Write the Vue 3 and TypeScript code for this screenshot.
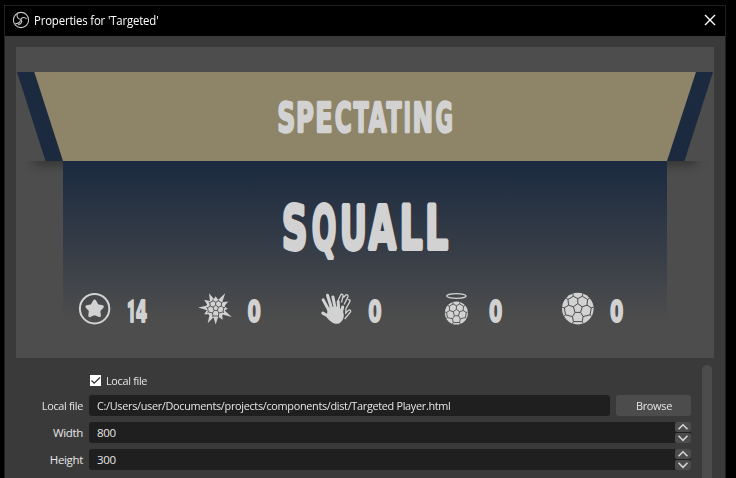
<script setup lang="ts">
import { ref } from 'vue'

interface Glyph { ch: string; x: number; len: number }

// [advance, ink start, ink end] of each bold glyph, in font units
const metrics: Record<string, [number, number, number]> = {
  S: [1475, 128, 1366], P: [1501, 188, 1416], E: [1399, 188, 1276], C: [1503, 102, 1376],
  T: [1397, 10, 1386], A: [1585, 7, 1577], I: [762, 188, 573], N: [1714, 188, 1526],
  G: [1681, 102, 1530], Q: [1741, 102, 1638], U: [1663, 174, 1489], L: [1305, 188, 1268],
  0: [1425, 94, 1331], 4: [1425, 74, 1352], 1: [1184, 130, 850],
}

// Stretches a glyph so that its inked part starts at x and is w wide
function fit(ch: string, x: number, w: number, stroke: number): Glyph {
  const [adv, a, b] = metrics[ch]
  const k = (w - stroke) / (b - a)
  return { ch, x: x + stroke / 2 - k * a, len: k * adv }
}
function word(text: string, xs: number[], ws: number[], stroke: number): Glyph[] {
  return [...text].map((ch, i) => fit(ch, xs[i], ws[i], stroke))
}

const title = word(
  'SPECTATING',
  [277.6, 297, 316.3, 334.7, 352.4, 367.5, 385.4, 404.2, 413.5, 435.3],
  [17.5, 17, 16, 16.9, 17.3, 20.5, 17.3, 6.2, 18.5, 17.3],
  2.4,
)
const player = word('SQUALL', [282, 311.3, 340.7, 366.7, 401, 426.5], [25.5, 25.5, 25.3, 31.2, 23, 23], 3.8)
const score = word('14', [127, 135.3], [7.4, 12.3], 2)
const zeros = [247.4, 368.1, 488.9, 609.8].map((x) => fit('0', x, 13.6, 2))

const tips = [
  [0, -12], [9.5, -15], [12.5, -6.7], [12, 0.5], [16, 8.9], [7, 11.5],
  [0, 16.3], [-8, 15], [-11.5, 6], [-17.5, -0.7], [-11.5, -8.5], [-6.7, -15],
]
const spikes = tips.map(([x, y]) => {
  const a = Math.atan2(y, x)
  const p = (t: number) => `${(8.6 * Math.cos(t)).toFixed(2)} ${(8.6 * Math.sin(t)).toFixed(2)}`
  return `M${p(a - 0.29)}L${x} ${y}L${p(a + 0.29)}Z`
}).join('')

const local = ref(true)
const path = ref('C:/Users/user/Documents/projects/components/dist/Targeted Player.html')
const sizes = ref([
  { label: 'Width', value: 800 },
  { label: 'Height', value: 300 },
])
</script>

<template>
  <div class="desktop">
    <section class="window">
      <header class="titlebar">
        <svg class="logo" viewBox="0 0 18 18" width="18" height="18">
          <circle cx="9" cy="9" r="7.6" />
          <path d="M5.3 3.2C4.4 6 6 8.2 8.8 8.2C10 6.3 12.8 5.5 14.6 8M9 8.4C10.5 10.6 9.3 13.2 6.2 13.6M3.4 12.4C5.4 13 7.6 12 8.6 9.4" />
        </svg>
        <h1>Properties for 'Targeted'</h1>
        <svg class="close" viewBox="0 0 12 12" width="12" height="12"><path d="M1 1L11 11M11 1L1 11" /></svg>
      </header>

      <main class="content">
        <svg class="preview" viewBox="16 47 698 311" width="698" height="311">
          <defs>
            <linearGradient id="body" x1="0" y1="0" x2="0" y2="1">
              <stop offset="0" stop-color="#1b2a40" />
              <stop offset="1" stop-color="#1b2a40" stop-opacity="0" />
            </linearGradient>
            <filter id="soft" x="-10%" y="-100%" width="120%" height="300%"><feGaussianBlur stdDeviation="6" /></filter>
            <clipPath id="under"><path d="M16 161H714V190H16Z" /></clipPath>
            <clipPath id="disc"><circle r="15.8" /></clipPath>
            <g id="ball">
              <circle r="15.8" class="fill" />
              <path
                clip-path="url(#disc)"
                class="seam"
                d="M0-5L4.4-1.8L2.8 3.8H-2.8L-4.4-1.8ZM0-5V-10M4.4-1.8L9.2-3.4M2.8 3.8L5.3 8M-2.8 3.8L-5.3 8M-4.4-1.8L-9.2-3.4M0-10L4.5-12.3L9.8-9.2L9.2-3.4L13.5-.8L12.3 6.2L5.3 8L4.4 13H-4.4L-5.3 8L-12.3 6.2L-13.5-.8L-9.2-3.4L-9.8-9.2L-4.5-12.3ZM4.5-12.3L5.3-16M-4.5-12.3L-5.3-16M9.8-9.2L13-11M-9.8-9.2L-13-11M13.5-.8L17-1.8M-13.5-.8L-17-1.8M12.3 6.2L15 9M-12.3 6.2L-15 9M4.4 13L6 16M-4.4 13L-6 16"
              />
            </g>
          </defs>

          <path clip-path="url(#under)" filter="url(#soft)" class="shadow" d="M34 148H696V164H34Z" />
          <rect x="63" y="161" width="604" height="160" class="base" />
          <rect x="63" y="161" width="604" height="160" fill="url(#body)" />
          <path class="navy" d="M17 72H713L684.5 161H45.5Z" />
          <path class="gold" d="M34.3 72H696L667 161H63Z" />

          <text class="block title" y="131.8"><tspan v-for="(g, i) in title" :key="i" :x="g.x" :textLength="g.len" lengthAdjust="spacingAndGlyphs">{{ g.ch }}</tspan></text>
          <text class="block player" y="249.2"><tspan v-for="(g, i) in player" :key="i" :x="g.x" :textLength="g.len" lengthAdjust="spacingAndGlyphs">{{ g.ch }}</tspan></text>
          <text class="block stat" y="321.8"><tspan v-for="(g, i) in score" :key="i" :class="{ one: g.ch === '1' }" :x="g.x" :textLength="g.len" lengthAdjust="spacingAndGlyphs">{{ g.ch }}</tspan></text>
          <text v-for="g in zeros" :key="g.x" class="block stat" :x="g.x" y="321.8" :textLength="g.len" lengthAdjust="spacingAndGlyphs">{{ g.ch }}</text>

          <g transform="translate(94.6 308.7)">
            <circle r="14.7" class="ring" />
            <path class="star" d="M0-7.6L2.6-3.1L7.7-2L4.2 1.8L4.8 6.9L0 4.8L-4.8 6.9L-4.2 1.8L-7.7-2L-2.6-3.1Z" />
          </g>
          <g transform="translate(215.7 308.2)">
            <path class="fill" :d="spikes" />
            <use href="#ball" transform="scale(.6)" class="heavy" />
          </g>
          <g transform="translate(335.5 308.5)">
            <path class="outline" d="M2.8-8.5L5-13.2C6-15 8-14.2 7.6-12.5L6-6M8-11L10-13.2C11.5-14.6 13.2-13.2 12.4-11.6L8.6-4M12.4-8.5C14-9.6 15.2-8.2 14.2-6.6L10.4.2L10.2 4.6L13.2 1.6C14.8.8 15.8 2.2 14.8 3.6L9.2 10.5" />
            <path class="fingers" d="M-12.7 4.6L-5 9M-12.3-8.6L-5.4 4M-8-13.2L-3 3M-2.6-11.6L.3 3M2.7-7L3.3 4M7.2-1.6L5 8" />
            <path class="fill" d="M-7.5-1L3-2L7.6 3.5C9.6 8.5 7 13 3.4 15C-1.5 16.4-5.5 13-9 8.5Z" />
          </g>
          <g transform="translate(456.4 0)">
            <ellipse cx="0" cy="296" rx="9.7" ry="2.4" class="halo" />
            <use href="#ball" transform="translate(0 313) scale(.73)" class="mid" />
          </g>
          <use href="#ball" transform="translate(577.8 308.6)" />
        </svg>

        <div class="form">
          <div class="rows">
            <label class="check" @click="local = !local">
              <svg viewBox="0 0 11 11" width="11" height="11"><rect width="11" height="11" /><path v-if="local" d="M1.5 5.5L4.2 8.2L10 2.5" /></svg>
              <span class="narrow">Local file</span>
            </label>
            <div class="row">
              <span class="label narrow">Local file</span>
              <div class="field file"><span class="narrow">{{ path }}</span></div>
              <button class="browse"><span>Browse</span></button>
            </div>
            <div v-for="s in sizes" :key="s.label" class="row">
              <span class="label">{{ s.label }}</span>
              <div class="field number">
                <span>{{ s.value }}</span>
                <div class="spin">
                  <button @click="s.value++"><svg viewBox="0 0 16 10" width="16" height="10"><path d="M3.5 7.3L8 2.8L12.5 7.3" /></svg></button>
                  <button @click="s.value--"><svg viewBox="0 0 16 10" width="16" height="10"><path d="M3.5 2.8L8 7.3L12.5 2.8" /></svg></button>
                </div>
              </div>
            </div>
          </div>
          <div class="scrollbar"></div>
        </div>
      </main>
    </section>
  </div>
</template>

<style>
body { background: #000; overflow: hidden; }
</style>

<style scoped>
.desktop { box-sizing: border-box; width: 736px; height: 478px; padding: 5px 10px 0 4px; overflow: hidden; background: #000; font-family: "Open Sans", "Noto Sans", sans-serif; }
.window { box-sizing: border-box; width: 722px; height: 490px; border: 1px solid #202020; background: #3a3a3a; }
.titlebar { display: flex; align-items: center; height: 30px; padding: 0 9px 0 7px; background: #000; }
.titlebar h1 { flex: 1; margin: 0 0 1px 4px; font-size: 12px; font-weight: 400; letter-spacing: -0.18px; color: #fff; white-space: nowrap; transform: scaleX(.95); transform-origin: left; }
.logo { margin-bottom: 2px; fill: none; stroke: #c8c8c8; stroke-width: 1.1; }
.close { margin-bottom: 2px; fill: none; stroke: #fff; stroke-width: 1.4; }
.content { padding: 11px 11px 0; }
.preview { display: block; background: #4d4d4d; }
.shadow { fill: #000; opacity: .38; }
.base { fill: #4d4d4d; }
.navy { fill: #1c2a40; }
.gold { fill: #8e8468; }
.block { font-family: "DejaVu Sans", sans-serif; font-weight: 700; fill: #d2d2d2; stroke: #d2d2d2; stroke-linejoin: bevel; }
.title { font-size: 40.5px; stroke-width: 2.4px; }
.player { font-size: 60.5px; stroke-width: 3.8px; }
.stat { font-size: 31px; stroke-width: 2px; }
.one { font-family: Roboto, sans-serif; font-weight: 900; font-size: 31.8px; }
.fill { fill: #d2d2d2; }
.seam { fill: none; stroke: #4a4b4c; }
.heavy { stroke-width: 1.5; }
.mid { stroke-width: 1.2; }
.ring { fill: none; stroke: #d2d2d2; stroke-width: 2; }
.star { fill: #d2d2d2; stroke: #d2d2d2; stroke-width: 3; stroke-linejoin: round; }
.outline { fill: none; stroke: #d2d2d2; stroke-width: 1.3; }
.fingers { fill: none; stroke: #d2d2d2; stroke-width: 3; stroke-linecap: round; }
.halo { fill: none; stroke: #d2d2d2; stroke-width: 1.3; }
.form { display: flex; justify-content: space-between; height: 120px; padding: 7px 2px 0 0; }
.rows { display: flex; flex-direction: column; gap: 6px; width: 675px; font-size: 11.5px; letter-spacing: -0.33px; color: #e6e6e6; }
.narrow { transform: scaleX(.945); transform-origin: left; }
.check { display: flex; align-items: center; gap: 5px; height: 15px; margin: 8px 0 1px 74px; }
.check rect { fill: #fff; }
.check path { fill: none; stroke: #333; stroke-width: 1.3; }
.row { display: flex; align-items: center; height: 21px; }
.label { width: 67px; margin-right: 6px; text-align: right; white-space: nowrap; transform-origin: right; }
.field { display: flex; align-items: center; box-sizing: border-box; height: 21px; padding-left: 8px; border-radius: 3px; background: #1f1f1f; white-space: nowrap; }
.file { width: 521px; margin-right: 6px; }
.number { flex: 1; justify-content: space-between; }
button { padding: 0; border: 0; background: #4c4c4c; color: #e6e6e6; font: inherit; letter-spacing: inherit; }
.browse { width: 75px; height: 21px; border-radius: 3px; }
.browse span { display: inline-block; transform: scaleX(.95); }
.spin { display: flex; flex-direction: column; gap: 1px; }
.spin button { display: block; width: 16px; height: 10px; border-radius: 2px; }
.spin svg { display: block; fill: none; stroke: #d4d4d4; stroke-width: 1.6; }
.scrollbar { width: 10px; height: 140px; border-radius: 5px; background: #4c4c4c; }
</style>
